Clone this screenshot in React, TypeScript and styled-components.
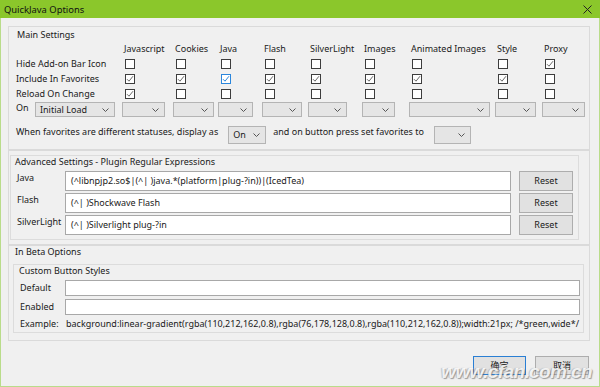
import React from 'react';
import styled, { createGlobalStyle } from 'styled-components';

const GlobalStyle = createGlobalStyle`
	html, body {
		margin: 0;
		padding: 0;
		background: #f0f0f0;
	}
	body {
		font-family: "Noto Sans", "Noto Sans CJK SC", sans-serif;
		font-size: 9px;
		color: #1a1a1a;
	}
`;

const Window = styled.div`
	position: relative;
	width: 600px;
	height: 387px;
	display: flex;
	flex-direction: column;
	overflow: hidden;
	background: #f0f0f0;
`;

const TitleBar = styled.div`
	height: 18px;
	flex: none;
	display: flex;
	align-items: center;
	justify-content: space-between;
	padding: 0 8px 0 4px;
	background: #8bc72b;
	color: #111;
	font-size: 9.4px;
`;

const Body = styled.div`
	flex: 1;
	display: flex;
	flex-direction: column;
	padding: 8px 9px 0 7px;
	border: 1px solid #b9dc8a;
	border-top: none;
`;

const Panel = styled.section<{ $pad: string }>`
	border: 1px solid #dadada;
	padding: ${(p) => p.$pad};
`;

const Group = styled.div<{ $pad: string }>`
	border: 1px solid #dcdcdc;
	padding: ${(p) => p.$pad};
`;

const Heading = styled.div<{ $indent?: number }>`
	line-height: 12px;
	margin-left: ${(p) => p.$indent ?? 0}px;
`;

const MainHeading = styled(Heading)`
	line-height: 14px;
`;

const OptionGrid = styled.div<{ $cols: string }>`
	display: grid;
	grid-template-columns: ${(p) => p.$cols};
	grid-template-rows: 14px repeat(3, 15px) 17px;
	align-items: center;
	line-height: 14px;
`;

const ColHead = styled.div`
	padding-left: 2px;
	white-space: nowrap;
`;

const Cell = styled.div`
	padding-left: 3px;
	display: flex;
	align-items: center;
`;

const SelectCell = styled.div`
	align-self: start;
	display: flex;
	align-items: flex-start;
	padding-top: 1px;
`;

const Box = styled.span<{ $focus?: boolean }>`
	width: 10px;
	height: 10px;
	box-sizing: border-box;
	display: inline-flex;
	align-items: center;
	justify-content: center;
	background: #fff;
	border: 1px solid ${(p) => (p.$focus ? '#2b86dc' : '#3d3d3d')};
`;

const SelectBox = styled.div<{ $w: number; $h: number }>`
	width: ${(p) => p.$w}px;
	height: ${(p) => p.$h}px;
	box-sizing: border-box;
	display: flex;
	align-items: center;
	justify-content: space-between;
	padding: 0 5px 0 4px;
	background: #e5e5e5;
	border: 1px solid #b4b4b4;
	white-space: nowrap;
`;

const OnLabel = styled.span`
	width: 19px;
	margin-top: -1px;
`;

const FavRow = styled.div`
	display: flex;
	align-items: flex-start;
	margin-top: 7px;
	line-height: 14px;
	white-space: nowrap;

	& > div {
		margin-top: 1px;
	}
`;

const FavText = styled.span<{ $gap: number; $lead?: number }>`
	margin-right: ${(p) => p.$gap}px;
	margin-left: ${(p) => p.$lead ?? 0}px;
`;

const RegexRow = styled.div`
	display: flex;
	align-items: flex-start;
	height: 20px;
	line-height: 14px;
`;

const RegexList = styled.div`
	display: flex;
	flex-direction: column;
	gap: 2px;
	margin-top: 3px;
`;

const FieldLabel = styled.div<{ $w: number }>`
	width: ${(p) => p.$w}px;
	flex: none;
	padding-left: 1px;
	white-space: nowrap;
`;

const TextInput = styled.div<{ $h: number }>`
	flex: 1;
	height: ${(p) => p.$h}px;
	box-sizing: border-box;
	display: flex;
	align-items: center;
	padding-left: 5px;
	background: #fff;
	border: 1px solid #a8a8a8;
	white-space: nowrap;
	overflow: hidden;
`;

const Button = styled.div<{ $w: number; $primary?: boolean }>`
	width: ${(p) => p.$w}px;
	height: 19px;
	box-sizing: border-box;
	display: flex;
	align-items: center;
	justify-content: center;
	background: #e1e1e1;
	border: 1px solid ${(p) => (p.$primary ? '#2a7fd4' : '#adadad')};
`;

const ResetButton = styled(Button)`
	margin-left: 8px;
	height: 20px;
`;

const BetaGroup = styled(Group)`
	margin-top: 6px;
`;

const BetaFields = styled.div`
	display: flex;
	flex-direction: column;
	gap: 3px;
	margin-top: 3px;
`;

const BetaRow = styled.div`
	display: flex;
	align-items: center;
	height: 16px;
	line-height: 14px;
`;

const ExampleRow = styled.div`
	display: flex;
	margin-top: 2px;
	line-height: 14px;
	white-space: nowrap;
`;

const Footer = styled.div`
	display: flex;
	justify-content: flex-end;
	gap: 9px;
	margin-top: 15px;
	padding-right: 1px;
	font-family: "Noto Sans CJK SC", "Noto Sans", sans-serif;
	font-size: 9px;
`;

const Watermark = styled.div`
	position: absolute;
	right: 8px;
	bottom: 4px;
	font-family: "Liberation Sans", sans-serif;
	font-style: italic;
	font-weight: 700;
	font-size: 19px;
	letter-spacing: -0.6px;
	color: rgba(255, 255, 255, 0.85);
	text-shadow: 1px 1px 1px rgba(90, 90, 90, 0.55), -1px 0 1px rgba(120, 120, 120, 0.4);
	pointer-events: none;
`;

type Column = {
	name: string;
	width: number;
	select: number;
	hide: boolean;
	fav: boolean;
	reload: boolean;
};

const columns: Column[] = [
	{ name: 'Javascript', width: 51, select: 43, hide: false, fav: true, reload: true },
	{ name: 'Cookies', width: 45, select: 41, hide: false, fav: true, reload: false },
	{ name: 'Java', width: 44, select: 35, hide: false, fav: true, reload: false },
	{ name: 'Flash', width: 46, select: 40, hide: false, fav: true, reload: false },
	{ name: 'SilverLight', width: 54, select: 39, hide: false, fav: true, reload: false },
	{ name: 'Images', width: 47, select: 33, hide: false, fav: true, reload: false },
	{ name: 'Animated Images', width: 86, select: 81, hide: false, fav: true, reload: false },
	{ name: 'Style', width: 47, select: 41, hide: false, fav: true, reload: false },
	{ name: 'Proxy', width: 45, select: 43, hide: true, fav: false, reload: false },
];

const rows: { label: string; key: 'hide' | 'fav' | 'reload' }[] = [
	{ label: 'Hide Add-on Bar Icon', key: 'hide' },
	{ label: 'Include In Favorites', key: 'fav' },
	{ label: 'Reload On Change', key: 'reload' },
];

const regexes = [
	{ label: 'Java', value: '(^libnpjp2.so$|(^| )java.*(platform|plug-?in))|(IcedTea)' },
	{ label: 'Flash', value: '(^| )Shockwave Flash' },
	{ label: 'SilverLight', value: '(^| )Silverlight plug-?in' },
];

const Chevron = () => (
	<svg width="7" height="4" viewBox="0 0 7 4">
		<polyline points="0.5,0.5 3.5,3.5 6.5,0.5" fill="none" stroke="#555" strokeWidth="1" />
	</svg>
);

const Select = ({ w, h = 15, text }: { w: number; h?: number; text?: string }) => (
	<SelectBox $w={w} $h={h}>
		<span>{text}</span>
		<Chevron />
	</SelectBox>
);

const Checkbox = ({ checked, focus }: { checked: boolean; focus?: boolean }) => (
	<Box $focus={focus}>
		{checked && (
			<svg width="8" height="8" viewBox="0 0 8 8">
				<polyline
					points="1,4.2 3,6.2 7,1.2"
					fill="none"
					stroke={focus ? '#2b86dc' : '#6a6a6a'}
					strokeWidth="1"
				/>
			</svg>
		)}
	</Box>
);

export default function App() {
	const cols = ['106px', ...columns.map((c) => `${c.width}px`)].join(' ');

	return (
		<>
			<GlobalStyle />
			<Window>
				<TitleBar>
					<span>QuickJava Options</span>
					<svg width="9" height="9" viewBox="0 0 9 9">
						<path d="M0.5 0.5 L8.5 8.5 M8.5 0.5 L0.5 8.5" stroke="#222" strokeWidth="1" />
					</svg>
				</TitleBar>

				<Body>
					<Panel $pad="1px 0 5px 7px">
						<MainHeading $indent={1}>Main Settings</MainHeading>
						<OptionGrid $cols={cols}>
							<div />
							{columns.map((c) => (
								<ColHead key={c.name}>{c.name}</ColHead>
							))}

							{rows.map((r) => (
								<React.Fragment key={r.key}>
									<div>{r.label}</div>
									{columns.map((c) => (
										<Cell key={c.name}>
											<Checkbox
												checked={c[r.key]}
												focus={r.key === 'fav' && c.name === 'Java'}
											/>
										</Cell>
									))}
								</React.Fragment>
							))}

							<SelectCell>
								<OnLabel>On</OnLabel>
								<Select w={80} text="Initial Load" />
							</SelectCell>
							{columns.map((c) => (
								<SelectCell key={c.name}>
									<Select w={c.select} />
								</SelectCell>
							))}
						</OptionGrid>

						<FavRow>
							<FavText $gap={10}>When favorites are different statuses, display as</FavText>
							<Select w={38} h={18} text="On" />
							<FavText $gap={10} $lead={7}>
								and on button press set favorites to
							</FavText>
							<Select w={37} h={18} />
						</FavRow>
					</Panel>

					<Panel $pad="4px 10px 4px 1px">
						<Group $pad="0 5px 4px 5px">
							<Heading $indent={-1}>Advanced Settings - Plugin Regular Expressions</Heading>
							<RegexList>
								{regexes.map((r) => (
									<RegexRow key={r.label}>
										<FieldLabel $w={48}>{r.label}</FieldLabel>
										<TextInput $h={20}>{r.value}</TextInput>
										<ResetButton $w={54}>Reset</ResetButton>
									</RegexRow>
								))}
							</RegexList>
						</Group>
					</Panel>

					<Panel $pad="0 5px 7px 4px">
						<Heading $indent={2}>In Beta Options</Heading>
						<BetaGroup $pad="0 3px 1px 5px">
							<Heading>Custom Button Styles</Heading>
							<BetaFields>
								<BetaRow>
									<FieldLabel $w={45}>Default</FieldLabel>
									<TextInput $h={16} />
								</BetaRow>
								<BetaRow>
									<FieldLabel $w={45}>Enabled</FieldLabel>
									<TextInput $h={16} />
								</BetaRow>
							</BetaFields>
							<ExampleRow>
								<FieldLabel $w={46}>Example:</FieldLabel>
								<span>
									background:linear-gradient(rgba(110,212,162,0.8),rgba(76,178,128,0.8),rgba(110,212,162,0.8));width:21px;
									/*green,wide*/
								</span>
							</ExampleRow>
						</BetaGroup>
					</Panel>

					<Footer>
						<Button $w={53} $primary>
							确定
						</Button>
						<Button $w={54}>取消</Button>
					</Footer>
				</Body>

				<Watermark>www.cfan.com.cn</Watermark>
			</Window>
		</>
	);
}
